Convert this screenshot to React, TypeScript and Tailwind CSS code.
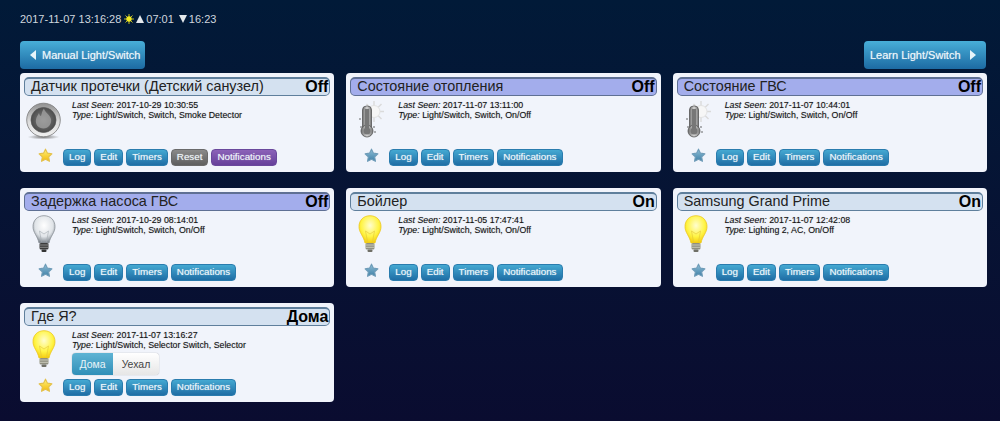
import React from "react";

type IconKind = "smoke" | "thermo" | "bulbOff" | "bulbOn";

type Device = {
  name: string;
  status: string;
  off: boolean;
  seen: string;
  type: string;
  icon: IconKind;
  fav: boolean;
  reset: boolean;
  selector: boolean;
};

function Star({ on, id }: { on: boolean; id: string }) {
  return (
    <svg width="15" height="15" viewBox="0 0 16 16" className="block">
      <defs>
        <linearGradient id={id} x1="0" y1="0" x2="0" y2="1">
          <stop offset="0" stopColor={on ? "#fff27a" : "#8fc0d8"} />
          <stop offset="1" stopColor={on ? "#f2b90c" : "#3f7fa6"} />
        </linearGradient>
      </defs>
      <path
        d="M8 1.200l2.100 4.300 4.700.7-3.400 3.300.8 4.700L8 12l-4.200 2.200.8-4.700L1.200 6.200l4.700-.7z"
        fill={`url(#${id})`}
        stroke={on ? "#e3c04a" : "#6f9cb8"}
        strokeWidth="1.200"
        strokeLinejoin="round"
      />
    </svg>
  );
}

function Bulb({ on, id }: { on: boolean; id: string }) {
  return (
    <svg width="24" height="38" viewBox="0 0 24 38" className="block ml-[1px]">
      <defs>
        <radialGradient id={id} cx="0.5" cy="0.36" r="0.62">
          <stop offset="0" stopColor={on ? "#fffdd0" : "#ffffff"} />
          <stop offset="0.65" stopColor={on ? "#fff444" : "#e0e4e8"} />
          <stop offset="1" stopColor={on ? "#f5d014" : "#858c94"} />
        </radialGradient>
      </defs>
      <path
        d="M12 .7C5.500.7 1 5.300 1 11.500c0 6.500 4.500 9 6 16.500h10c1.500-7.500 6-10 6-16.500C23 5.300 18.500.7 12 .7z"
        fill={`url(#${id})`}
        stroke={on ? "#ecc81e" : "#8a9097"}
        strokeWidth="0.8"
      />
      <path d="M9.500 27l-2-11M14.500 27l2-11M7.500 16l4.500 3 4.500-3" fill="none" stroke={on ? "#e2c638" : "#a5abb2"} strokeWidth="0.6" />
      <rect x="7.500" y="28" width="9" height="6.500" rx="1.500" fill={on ? "#8f8f80" : "#3c3c3c"} />
      <path d="M7.500 30h9M7.500 32.300h9" stroke={on ? "#d8d8c8" : "#a0a0a0"} strokeWidth="0.8" />
      <rect x="9.500" y="34.500" width="5" height="2.500" rx="1" fill={on ? "#6f6f66" : "#333"} />
    </svg>
  );
}

function Smoke() {
  return (
    <svg width="38" height="40" viewBox="0 0 38 40" className="block">
      <defs>
        <linearGradient id="ring" x1="0" y1="0" x2="0" y2="1">
          <stop offset="0" stopColor="#8f8f8f" />
          <stop offset="0.55" stopColor="#dcdcdc" />
          <stop offset="1" stopColor="#f0f0f0" />
        </linearGradient>
        <radialGradient id="core" cx="0.5" cy="0.5" r="0.55">
          <stop offset="0" stopColor="#808080" />
          <stop offset="1" stopColor="#484848" />
        </radialGradient>
        <radialGradient id="shadow" cx="0.5" cy="0.5" r="0.5">
          <stop offset="0" stopColor="#777" />
          <stop offset="1" stopColor="#777" stopOpacity="0" />
        </radialGradient>
      </defs>
      <ellipse cx="19.500" cy="37" rx="16" ry="2.500" fill="url(#shadow)" />
      <circle cx="19.500" cy="20" r="16.800" fill="url(#ring)" stroke="#7a7a7a" strokeWidth="0.8" />
      <circle cx="19.500" cy="20" r="12.500" fill="url(#core)" stroke="#555" strokeWidth="0.7" />
      <path
        d="M20 8.500c.5 3.500 5 5 7 10.500 1 4.500-2.500 9.500-7.500 9.500s-8.500-4-7.500-9c.5-3 2-4.500 3-6.500.5 2 1 3 2 3 1-3 1-5 3-7.500z"
        fill="#a8a8a8"
        opacity="0.7"
      />
    </svg>
  );
}

function Thermo({ id }: { id: string }) {
  return (
    <svg width="30" height="38" viewBox="0 0 30 38" className="block">
      <defs>
        <linearGradient id={id} x1="0" y1="0" x2="1" y2="0">
          <stop offset="0" stopColor="#6d6d6d" />
          <stop offset="0.5" stopColor="#d4d4d4" />
          <stop offset="1" stopColor="#777" />
        </linearGradient>
      </defs>
      <g stroke="#dadada" strokeWidth="1.400">
        <path d="M20 1v21M9.500 11.500h21M12.500 4l15 15M27.500 4l-15 15" />
      </g>
      <circle cx="20" cy="11.500" r="6" fill="#f6f6f6" stroke="#e2e2e2" />
      <rect x="8.500" y="6" width="9" height="25" rx="4" fill={`url(#${id})`} stroke="#555" strokeWidth="0.8" />
      <circle cx="13" cy="31" r="6" fill={`url(#${id})`} stroke="#555" strokeWidth="0.8" />
      <rect x="11" y="9" width="4" height="21" fill="#777" />
      <circle cx="13" cy="31" r="3.500" fill="#777" />
      <g fill="#555">
        <circle cx="6" cy="19" r="0.800" />
        <circle cx="7" cy="27" r="0.800" />
        <circle cx="20" cy="27" r="0.800" />
        <circle cx="21" cy="32" r="0.800" />
      </g>
    </svg>
  );
}

function DeviceIcon({ kind, id }: { kind: IconKind; id: string }) {
  if (kind === "smoke") return <Smoke />;
  if (kind === "thermo") return <Thermo id={id} />;
  return <Bulb on={kind === "bulbOn"} id={id} />;
}

function Btn({ label, tone = "blue" }: { label: string; tone?: "blue" | "gray" | "purple" }) {
  const toneClass =
    tone === "gray"
      ? "bg-gradient-to-b from-[#8a8a8a] to-[#5f5f5f] border-[#6a6a6a]"
      : tone === "purple"
        ? "bg-gradient-to-b from-[#8c62b8] to-[#66409a] border-[#6a489c]"
        : "bg-gradient-to-b from-[#45a9d2] to-[#1f6ea5] border-[#2a7cae]";
  return (
    <span className={`h-[17px] px-[5px] flex items-center rounded-[4px] border text-[9.8px] text-[#eef6fa] [text-shadow:0_0_1px_#ffffff99] ${toneClass}`}>
      {label}
    </span>
  );
}

function Card({ d, i }: { d: Device; i: number }) {
  return (
    <div className="h-[99px] bg-[#f1f4fb] rounded-[4px] px-[4px] pt-[4px] flex flex-col text-[#111]">
      <div
        className={`h-[19px] rounded-[5px] flex items-center justify-between pl-[6px] pr-[1px] border-t-[2px] border-x-[1px] border-b-[1px] ${
          d.off ? "bg-[#a3adec] border-[#5f7094]" : "bg-[#d4e1f0] border-[#5f7f9c]"
        }`}
      >
        <span className="mb-[2px] text-[14.4px] leading-none text-[#222]">{d.name}</span>
        <span className="text-[16px] leading-none font-bold text-black">{d.status}</span>
      </div>
      <div className="h-[52px] flex">
        <div className="w-[38px] mr-[10px] pt-[4px] flex justify-center">
          <DeviceIcon kind={d.icon} id={`ic${i}`} />
        </div>
        <div className="flex-1 pt-[4px] text-[8.8px] leading-[10px] text-[#111] [text-shadow:0_0_1px_#00000055]">
          <div>
            <i>Last Seen:</i> {d.seen}
          </div>
          <div>
            <i>Type:</i> {d.type}
          </div>
          {d.selector && (
            <div className="mt-[3px] flex h-[22px] w-[87px] rounded-[4px] overflow-hidden shadow-[0_0_1px_#888] text-[10.5px] [text-shadow:none]">
              <span className="w-[41px] flex items-center justify-center bg-gradient-to-b from-[#5fb4d4] to-[#2f8fb8] text-[#e8f4f8]">Дома</span>
              <span className="flex-1 flex items-center justify-center bg-gradient-to-b from-[#ffffff] to-[#e6e6e6] text-[#444]">Уехал</span>
            </div>
          )}
        </div>
      </div>
      <div className="h-[24px] flex items-start">
        <div className="ml-[14px] w-[15px] mr-[10px]">
          <Star on={d.fav} id={`st${i}`} />
        </div>
        <div className="mt-[1px] flex gap-[3px]">
          <Btn label="Log" />
          <Btn label="Edit" />
          <Btn label="Timers" />
          {d.reset && <Btn label="Reset" tone="gray" />}
          <Btn label="Notifications" tone={d.reset ? "purple" : "blue"} />
        </div>
      </div>
    </div>
  );
}

const devices: Device[] = [
  { name: "Датчик протечки (Детский санузел)", status: "Off", off: false, seen: "2017-10-29 10:30:55", type: "Light/Switch, Switch, Smoke Detector", icon: "smoke", fav: true, reset: true, selector: false },
  { name: "Состояние отопления", status: "Off", off: true, seen: "2017-11-07 13:11:00", type: "Light/Switch, Switch, On/Off", icon: "thermo", fav: false, reset: false, selector: false },
  { name: "Состояние ГВС", status: "Off", off: true, seen: "2017-11-07 10:44:01", type: "Light/Switch, Switch, On/Off", icon: "thermo", fav: false, reset: false, selector: false },
  { name: "Задержка насоса ГВС", status: "Off", off: true, seen: "2017-10-29 08:14:01", type: "Light/Switch, Switch, On/Off", icon: "bulbOff", fav: false, reset: false, selector: false },
  { name: "Бойлер", status: "On", off: false, seen: "2017-11-05 17:47:41", type: "Light/Switch, Switch, On/Off", icon: "bulbOn", fav: false, reset: false, selector: false },
  { name: "Samsung Grand Prime", status: "On", off: false, seen: "2017-11-07 12:42:08", type: "Lighting 2, AC, On/Off", icon: "bulbOn", fav: false, reset: false, selector: false },
  { name: "Где Я?", status: "Дома", off: false, seen: "2017-11-07 13:16:27", type: "Light/Switch, Selector Switch, Selector", icon: "bulbOn", fav: true, reset: false, selector: true },
];

export default function App() {
  return (
    <div
      className="h-[421px] w-[1000px] overflow-hidden bg-gradient-to-b from-[#011a38] to-[#0a0c30] pl-[20px] pr-[13px] text-[#cfd6de]"
      style={{ fontFamily: '"Liberation Sans", Arial, sans-serif' }}
    >
      <div className="h-[41px] pt-[12px] text-[11px] leading-[14px] flex items-start">
        <span>2017-11-07 13:16:28</span>
        <svg width="10" height="10" viewBox="0 0 12 12" className="ml-[3px] mr-[2px] mt-[2px]">
          <g stroke="#e8e020" strokeWidth="1">
            <path d="M6 0v12M0 6h12M1.800 1.800l8.400 8.400M10.200 1.800l-8.400 8.400" />
          </g>
          <circle cx="6" cy="6" r="3.200" fill="#f4ea20" />
        </svg>
        <span className="mt-[3px] mr-[2px] w-0 h-0 border-x-[4px] border-x-transparent border-b-[8px] border-b-[#e4e8ec]" />
        <span>07:01</span>
        <span className="mt-[3px] ml-[5px] mr-[2px] w-0 h-0 border-x-[4px] border-x-transparent border-t-[8px] border-t-[#e4e8ec]" />
        <span>16:23</span>
      </div>
      <div className="flex justify-between items-start h-[32px]">
        <div className="w-[125px] h-[28px] rounded-[4px] bg-gradient-to-b from-[#48aed8] to-[#1d6ba3] flex items-center text-[11px] text-[#eef6fa] [text-shadow:0_0_1px_#ffffff99] pl-[10px]">
          <span className="w-0 h-0 border-y-[5px] border-y-transparent border-r-[6px] border-r-[#e6f4fa] mr-[6px]" />
          Manual Light/Switch
        </div>
        <div className="w-[122px] h-[28px] rounded-[4px] bg-gradient-to-b from-[#48aed8] to-[#1d6ba3] flex items-center text-[11px] text-[#eef6fa] [text-shadow:0_0_1px_#ffffff99] pl-[6px] mr-[1px]">
          Learn Light/Switch
          <span className="w-0 h-0 border-y-[5px] border-y-transparent border-l-[6px] border-l-[#e6f4fa] ml-[9px]" />
        </div>
      </div>
      <div className="grid grid-cols-3 gap-x-[12px] gap-y-[16px]">
        {devices.map((d, i) => (
          <Card key={d.name} d={d} i={i} />
        ))}
      </div>
    </div>
  );
}
